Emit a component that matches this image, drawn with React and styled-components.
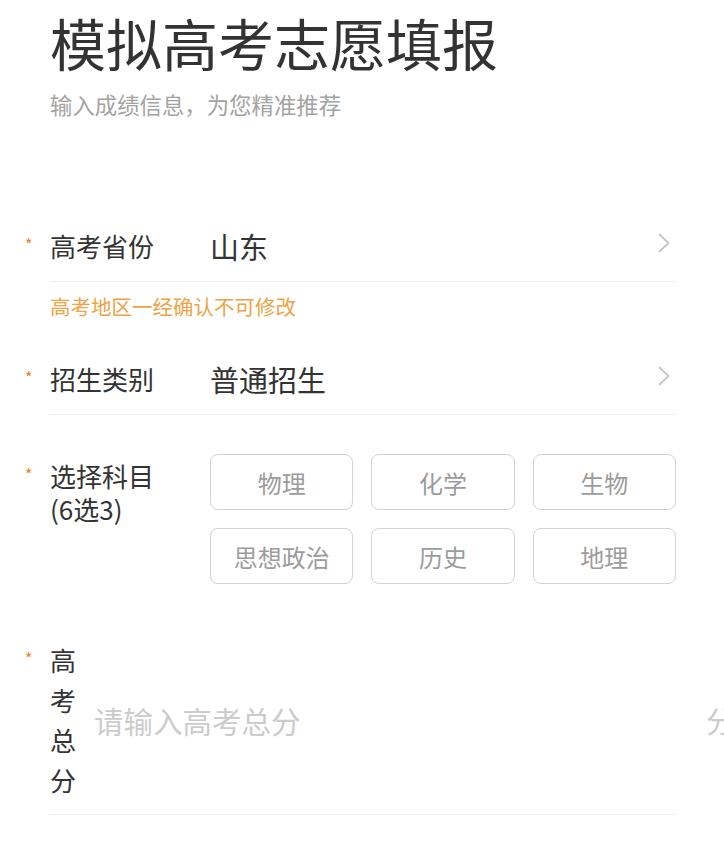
import React from "react";
import styled, { createGlobalStyle } from "styled-components";

const Global = createGlobalStyle`
  html, body {
    margin: 0;
    padding: 0;
    background: #ffffff;
    overflow-x: hidden;
  }
  body {
    font-family: "Noto Sans CJK SC", "Noto Sans", sans-serif;
    color: #333333;
  }
  input::placeholder {
    color: #cccccc;
  }
`;

const Page = styled.div`
  width: 724px;
  box-sizing: border-box;
  padding: 3px 48px 40px 50px;
  overflow: hidden;
`;

const Title = styled.h1`
  margin: 0;
  font-size: 56px;
  line-height: 78px;
  font-weight: 400;
  color: #333333;
`;

const Subtitle = styled.p`
  margin: 8px 0 0;
  font-size: 22.4px;
  line-height: 30px;
  color: #a3a3a3;
`;

const Form = styled.div`
  margin-top: 91px;
  display: flex;
  flex-direction: column;
`;

const Field = styled.div`
  display: flex;
  align-items: ${(p) => (p.$top ? "flex-start" : "center")};
  gap: 18px;
  height: ${(p) => (p.$h ? `${p.$h}px` : "auto")};
  padding: ${(p) => p.$pad || "0"};
  margin-top: ${(p) => p.$mt || 0}px;
  border-bottom: ${(p) => (p.$noLine ? "none" : "1px solid #eeeeee")};
`;

const Label = styled.div`
  position: relative;
  flex: 0 1 142px;
  font-size: 26px;
  line-height: ${(p) => p.$lh}px;
  margin-top: ${(p) => p.$mt || 0}px;
  color: #333333;

  &::before {
    content: "*";
    position: absolute;
    left: -25px;
    top: ${(p) => p.$lh / 2 - 10}px;
    font-size: 16px;
    line-height: 16px;
    color: #ee8126;
  }
`;

const Value = styled.div`
  flex: 1;
  font-size: 29px;
  line-height: 36px;
  color: #333333;
`;

const Chevron = styled.svg`
  flex: none;
  width: 12px;
  height: 20px;
  margin-right: 6px;
  margin-top: -6px;
`;

const Hint = styled.p`
  margin: 10px 0 23px;
  font-size: 20.5px;
  line-height: 28px;
  color: #eda445;
`;

const SubjectGrid = styled.div`
  flex: 1;
  display: grid;
  grid-template-columns: repeat(3, 1fr);
  gap: 18px;
`;

const Subject = styled.button`
  height: 56px;
  border: 1px solid #d2d2d2;
  border-radius: 8px;
  background: #ffffff;
  font-family: inherit;
  font-size: 24px;
  color: #9c9c9c;
  padding: 0;
  cursor: pointer;
`;

const ScoreInput = styled.input`
  flex: 0 0 594px;
  border: none;
  outline: none;
  background: transparent;
  padding: 0;
  font-family: inherit;
  font-size: 29.5px;
  line-height: 40px;
  color: #333333;
`;

const Suffix = styled.span`
  flex: none;
  font-size: 29px;
  color: #cccccc;
`;

const ChevronIcon = () => (
  <Chevron viewBox="0 0 12 20">
    <polyline
      points="1.5,1.5 10.5,10 1.5,18.5"
      fill="none"
      stroke="#c6c6c6"
      strokeWidth="1.8"
      strokeLinecap="round"
      strokeLinejoin="round"
    />
  </Chevron>
);

const subjects = ["物理", "化学", "生物", "思想政治", "历史", "地理"];

export default function App() {
  return (
    <Page>
      <Global />
      <Title>模拟高考志愿填报</Title>
      <Subtitle>输入成绩信息，为您精准推荐</Subtitle>
      <Form>
        <Field $h={71}>
          <Label $lh={36}>高考省份</Label>
          <Value>山东</Value>
          <ChevronIcon />
        </Field>
        <Hint>高考地区一经确认不可修改</Hint>
        <Field $h={71}>
          <Label $lh={36}>招生类别</Label>
          <Value>普通招生</Value>
          <ChevronIcon />
        </Field>
        <Field $top $noLine $pad="39px 0 0">
          <Label $lh={33} $mt={5}>
            选择科目
            <br />
            (6选3)
          </Label>
          <SubjectGrid>
            {subjects.map((s) => (
              <Subject key={s} type="button">
                {s}
              </Subject>
            ))}
          </SubjectGrid>
        </Field>
        <Field $mt={56} $pad="0 0 14px">
          <Label $lh={40}>高考总分</Label>
          <ScoreInput placeholder="请输入高考总分" />
          <Suffix>分</Suffix>
        </Field>
      </Form>
    </Page>
  );
}
